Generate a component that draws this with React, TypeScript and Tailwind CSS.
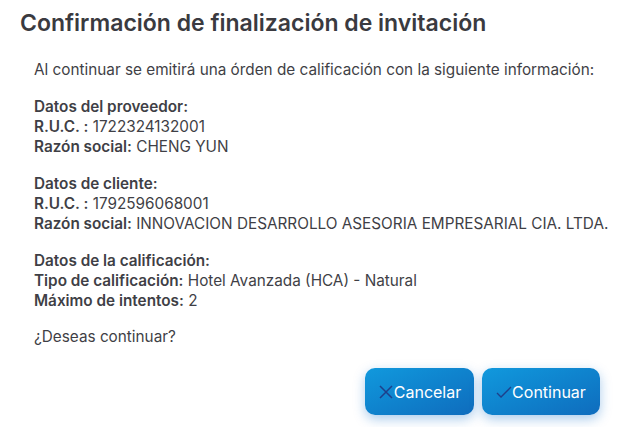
import React from "react";

export default function App() {
  return (
    <div className="w-[619px] h-[427px] bg-white overflow-hidden font-['Inter',sans-serif]">
      <h1 className="pl-[20px] pt-[8px] text-[23px] leading-[30px] font-semibold text-[#3a3a40] font-['Inter',sans-serif]">
        Confirmación de finalización de invitación
      </h1>
      <div className="pl-[34px] pt-[22px] text-[15.3px] leading-[20px] text-[#3f3f46] font-['Inter',sans-serif]">
        <p>Al continuar se emitirá una órden de calificación con la siguiente información:</p>
        <div className="mt-[17px]">
          <p className="font-semibold">Datos del proveedor:</p>
          <p><span className="font-semibold">R.U.C. :</span> 1722324132001</p>
          <p><span className="font-semibold">Razón social:</span> CHENG YUN</p>
        </div>
        <div className="mt-[17px]">
          <p className="font-semibold">Datos de cliente:</p>
          <p><span className="font-semibold">R.U.C. :</span> 1792596068001</p>
          <p><span className="font-semibold">Razón social:</span> INNOVACION DESARROLLO ASESORIA EMPRESARIAL CIA. LTDA.</p>
        </div>
        <div className="mt-[17px]">
          <p className="font-semibold">Datos de la calificación:</p>
          <p><span className="font-semibold">Tipo de calificación:</span> Hotel Avanzada (HCA) - Natural</p>
          <p><span className="font-semibold">Máximo de intentos:</span> 2</p>
        </div>
        <p className="mt-[16px]">¿Deseas continuar?</p>
      </div>
      <div className="flex justify-end gap-[8px] pr-[19px] mt-[21px] font-['Inter',sans-serif]">
        <button className="h-[47px] w-[109px] rounded-[10px] bg-gradient-to-br from-[#1199dd] to-[#0f6cbd] text-white text-[16px] flex items-center justify-center shadow-[0_4px_12px_rgba(14,110,200,0.35)]">
          <svg width="16" height="16" viewBox="0 0 16 16" fill="none" stroke="#1e3f8a" strokeWidth="1.5"><path d="M2 2L14 14M14 2L2 14" /></svg>
          <span>Cancelar</span>
        </button>
        <button className="h-[47px] w-[118px] rounded-[10px] bg-gradient-to-br from-[#1199dd] to-[#0f6cbd] text-white text-[16px] flex items-center justify-center shadow-[0_4px_12px_rgba(14,110,200,0.35)]">
          <svg width="16" height="16" viewBox="0 0 16 16" fill="none" stroke="#1e3f8a" strokeWidth="1.3"><path d="M1 9L5 13L15 3" /></svg>
          <span>Continuar</span>
        </button>
      </div>
    </div>
  );
}
